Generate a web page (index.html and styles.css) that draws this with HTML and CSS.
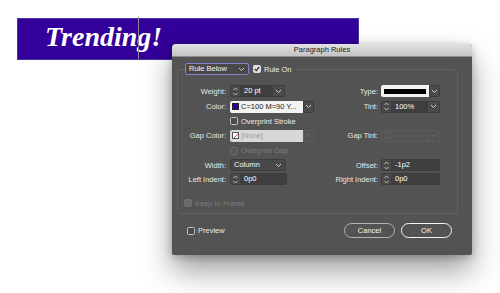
FILE: index.html
```html
<!DOCTYPE html>
<html lang="en">
<head>
  <meta charset="UTF-8" />
  <title>Paragraph Rules</title>
  <link rel="stylesheet" href="styles.css">
</head>
<body>
  <div class="page">
    <!-- Layout frame -->
    <div class="banner">
      <span class="banner-text">Trending!</span>
      <span class="caret"></span>
    </div>

    <!-- Dialog window -->
    <div class="dialog">
      <div class="titlebar">Paragraph Rules</div>
      <div class="dialog-body">
        <div class="top-row">
          <div class="select focus">
            <span>Rule Below</span>
            <svg width="7" height="5" viewBox="0 0 7 5"><path d="M1 1l2.5 2.5L6 1" fill="none" stroke="#d0d0d0"/></svg>
          </div>
          <div class="check">
            <span class="cb on"><svg width="6" height="6" viewBox="0 0 6 6"><path d="M0.8 3l1.5 1.6L5.2 1" fill="none" stroke="#333" stroke-width="1.3"/></svg></span>
            <span>Rule On</span>
          </div>
        </div>

        <div class="group">
          <div class="grid">
            <!-- row 1 -->
            <div class="lbl">Weight:</div>
            <div class="spin w55">
              <span class="spin-arrows"><svg width="5" height="9" viewBox="0 0 5 9"><path d="M0.5 3l2-2 2 2M0.5 6l2 2 2-2" fill="none" stroke="#c8c8c8" stroke-width="0.9"/></svg></span>
              <span class="spin-val">20 pt</span>
              <span class="spin-drop"><svg width="7" height="5" viewBox="0 0 7 5"><path d="M1 1l2.5 2.5L6 1" fill="none" stroke="#d0d0d0"/></svg></span>
            </div>
            <div class="lbl r">Type:</div>
            <div class="field">
              <span class="field-main type-main"><span class="type-line"></span></span>
              <span class="field-drop"><svg width="7" height="5" viewBox="0 0 7 5"><path d="M1 1l2.5 2.5L6 1" fill="none" stroke="#d0d0d0"/></svg></span>
            </div>

            <!-- row 2 -->
            <div class="lbl">Color:</div>
            <div class="field">
              <span class="field-main"><span class="swatch"></span>C=100 M=90 Y...</span>
              <span class="field-drop"><svg width="7" height="5" viewBox="0 0 7 5"><path d="M1 1l2.5 2.5L6 1" fill="none" stroke="#d0d0d0"/></svg></span>
            </div>
            <div class="lbl r">Tint:</div>
            <div class="spin">
              <span class="spin-arrows"><svg width="5" height="9" viewBox="0 0 5 9"><path d="M0.5 3l2-2 2 2M0.5 6l2 2 2-2" fill="none" stroke="#c8c8c8" stroke-width="0.9"/></svg></span>
              <span class="spin-val">100%</span>
              <span class="spin-drop"><svg width="7" height="5" viewBox="0 0 7 5"><path d="M1 1l2.5 2.5L6 1" fill="none" stroke="#d0d0d0"/></svg></span>
            </div>

            <!-- row 3 -->
            <div></div>
            <div class="check span2">
              <span class="cb"></span>
              <span>Overprint Stroke</span>
            </div>
            <div></div>

            <!-- row 4 -->
            <div class="lbl">Gap Color:</div>
            <div class="field off">
              <span class="field-main"><span class="swatch none"><svg width="7" height="7" viewBox="0 0 7 7"><path d="M0 7L7 0" stroke="#d3202a" stroke-width="1.2"/></svg></span>[None]</span>
              <span class="field-drop"><svg width="7" height="5" viewBox="0 0 7 5"><path d="M1 1l2.5 2.5L6 1" fill="none" stroke="#6c6c6c"/></svg></span>
            </div>
            <div class="lbl r">Gap Tint:</div>
            <div class="spin off">
              <span class="spin-arrows"><svg width="5" height="9" viewBox="0 0 5 9"><path d="M0.5 3l2-2 2 2M0.5 6l2 2 2-2" fill="none" stroke="#6c6c6c" stroke-width="0.9"/></svg></span>
              <span class="spin-val"></span>
              <span class="spin-drop"><svg width="7" height="5" viewBox="0 0 7 5"><path d="M1 1l2.5 2.5L6 1" fill="none" stroke="#6c6c6c"/></svg></span>
            </div>

            <!-- row 5 -->
            <div></div>
            <div class="check span2 off">
              <span class="cb"></span>
              <span>Overprint Gap</span>
            </div>
            <div></div>

            <!-- row 6 -->
            <div class="lbl">Width:</div>
            <div class="select w56">
              <span>Column</span>
              <svg width="7" height="5" viewBox="0 0 7 5"><path d="M1 1l2.5 2.5L6 1" fill="none" stroke="#d0d0d0"/></svg>
            </div>
            <div class="lbl r">Offset:</div>
            <div class="spin">
              <span class="spin-arrows"><svg width="5" height="9" viewBox="0 0 5 9"><path d="M0.5 3l2-2 2 2M0.5 6l2 2 2-2" fill="none" stroke="#c8c8c8" stroke-width="0.9"/></svg></span>
              <span class="spin-val">-1p2</span>
            </div>

            <!-- row 7 -->
            <div class="lbl">Left Indent:</div>
            <div class="spin w57">
              <span class="spin-arrows"><svg width="5" height="9" viewBox="0 0 5 9"><path d="M0.5 3l2-2 2 2M0.5 6l2 2 2-2" fill="none" stroke="#c8c8c8" stroke-width="0.9"/></svg></span>
              <span class="spin-val">0p0</span>
            </div>
            <div class="lbl r">Right Indent:</div>
            <div class="spin">
              <span class="spin-arrows"><svg width="5" height="9" viewBox="0 0 5 9"><path d="M0.5 3l2-2 2 2M0.5 6l2 2 2-2" fill="none" stroke="#c8c8c8" stroke-width="0.9"/></svg></span>
              <span class="spin-val">0p0</span>
            </div>
          </div>

          <div class="check keep off">
            <span class="cb filled"></span>
            <span>Keep In Frame</span>
          </div>
        </div>

        <div class="footer">
          <div class="check">
            <span class="cb"></span>
            <span>Preview</span>
          </div>
          <div class="buttons">
            <button class="btn">Cancel</button>
            <button class="btn default">OK</button>
          </div>
        </div>
      </div>
    </div>
  </div>
</body>
</html>
```

FILE: styles.css
```css
body {
  margin: 0;
  background-color: #ffffff;
  font-family: 'Liberation Sans', Arial, sans-serif;
  overflow: hidden;
}

.page {
  position: relative;
  width: 500px;
  height: 293px;
  padding-top: 18px;
  box-sizing: border-box;
}

/* Purple text frame */
.banner {
  position: relative;
  margin-left: 17px;
  width: 342px;
  height: 42px;
  background-color: #330099;
  box-sizing: border-box;
  border: 1px solid #4a35a8;
}

.banner-text {
  display: block;
  padding: 4px 0 0 27px;
  font-family: 'Liberation Serif', 'Times New Roman', serif;
  font-style: italic;
  font-weight: bold;
  font-size: 28px;
  line-height: 28px;
  color: #ffffff;
}

.caret {
  position: absolute;
  left: 120px;
  top: -2px;
  width: 1px;
  height: 42px;
  background-color: #8d8a9c;
}

/* Dialog */
.dialog {
  position: absolute;
  left: 172px;
  top: 44px;
  width: 300px;
  height: 211px;
  background-color: #535353;
  border-radius: 4px 4px 2px 2px;
  box-shadow: 0 16px 30px rgba(0, 0, 0, 0.38), 0 2px 8px rgba(0, 0, 0, 0.25);
  font-size: 7.5px;
  color: #e8e8e8;
}

.titlebar {
  height: 12px;
  line-height: 12px;
  text-align: center;
  color: #222222;
  background: linear-gradient(#e2e2e2, #c4c4c4);
  border-bottom: 1px solid #8e8e8e;
  border-radius: 4px 4px 0 0;
}

.dialog-body {
  padding: 6px 0 0 5px;
}

.top-row {
  position: relative;
  z-index: 1;
  display: flex;
  align-items: center;
  gap: 4px;
  width: fit-content;
  height: 12px;
  margin-left: 8px;
  padding-right: 4px;
  background-color: #535353;
}

.select {
  display: flex;
  align-items: center;
  justify-content: space-between;
  height: 12px;
  padding: 0 3px 0 3px;
  box-sizing: border-box;
  background-color: #484848;
  border: 1px solid #3c3c3c;
  border-radius: 2px;
  color: #f6f6f6;
  line-height: 10px;
}

.select.focus {
  width: 64px;
  border-color: #7f86cf;
}

.select.w56 {
  width: 56px;
}

.check {
  display: flex;
  align-items: center;
  gap: 2px;
  color: #ececec;
}

.cb {
  display: flex;
  align-items: center;
  justify-content: center;
  width: 8px;
  height: 8px;
  box-sizing: border-box;
  border: 1px solid #c4c4c4;
  border-radius: 1.5px;
  background-color: #4a4a4a;
  margin-right: 1px;
}

.cb.on {
  background-color: #dedede;
  border-color: #dedede;
}

.check.off {
  color: #7d7d7d;
}

.check.off .cb {
  border-color: #6f6f6f;
  background-color: #575757;
}

.check.off .cb.filled {
  background-color: #6a6a6a;
}

.group {
  position: relative;
  margin-top: -6px;
  width: 281px;
  height: 145px;
  box-sizing: border-box;
  border: 1px solid #626262;
  border-radius: 3px;
  padding-top: 13px;
}

.grid {
  display: grid;
  grid-template-columns: 52px 84px 67px 59px;
  grid-template-rows: 16px 15px 14px 15px 15px 14px 14px;
  align-items: center;
}

.lbl {
  text-align: right;
  padding-right: 4px;
  white-space: nowrap;
}

.lbl.r {
  padding-right: 3px;
}

.span2 {
  grid-column: span 2;
}

/* Spinner fields */
.spin {
  display: flex;
  height: 12px;
  box-sizing: border-box;
  border: 1px solid #3c3c3c;
  border-radius: 2px;
  background-color: #4b4b4b;
}

.spin.w55 {
  width: 55px;
}

.spin.w57 {
  width: 57px;
}

.spin-arrows {
  display: flex;
  align-items: center;
  justify-content: center;
  width: 9px;
  border-right: 1px solid #3c3c3c;
}

.spin-val {
  flex: 1;
  padding-left: 3px;
  background-color: #3f3f3f;
  color: #ffffff;
  line-height: 10px;
}

.spin-drop,
.field-drop {
  display: flex;
  align-items: center;
  justify-content: center;
  width: 11px;
  border-left: 1px solid #3c3c3c;
}

.spin.off {
  border-color: #5c5c5c;
  background-color: #545454;
}

.spin.off .spin-arrows,
.spin.off .spin-drop {
  border-color: #5c5c5c;
}

.spin.off .spin-val {
  background-color: #555555;
}

/* Swatch fields */
.field {
  display: flex;
  height: 12px;
}

.field-main {
  flex: 1;
  display: flex;
  align-items: center;
  gap: 2px;
  padding-left: 2px;
  background-color: #f3f3f3;
  border-radius: 2px 0 0 2px;
  color: #151515;
  white-space: nowrap;
}

.field-drop {
  width: 9px;
  background-color: #4b4b4b;
  border: 1px solid #3c3c3c;
  border-radius: 0 2px 2px 0;
}

.type-main {
  padding: 3px 3px;
}

.type-line {
  flex: 1;
  height: 5px;
  background-color: #000000;
}

.swatch {
  display: flex;
  width: 7px;
  height: 7px;
  box-sizing: border-box;
  background-color: #330099;
  border: 1px solid #222222;
}

.swatch.none {
  background-color: #ffffff;
  border-color: #555555;
  overflow: hidden;
}

.field.off .field-main {
  background-color: #d8d8d8;
  color: #a0a0a0;
}

.field.off .field-drop {
  background-color: #535353;
  border-color: #5e5e5e;
}

.keep {
  margin: 11px 0 0 6px;
  height: 12px;
}

/* Footer */
.footer {
  display: flex;
  align-items: center;
  height: 15px;
  margin-top: 9px;
  padding-left: 10px;
  margin-right: 20px;
}

.buttons {
  display: flex;
  gap: 6px;
  margin-left: auto;
}

.btn {
  width: 51px;
  height: 15px;
  padding: 0;
  background-color: #535353;
  border: 1px solid #b3b3b3;
  border-radius: 8px;
  color: #f6f6f6;
  font-family: 'Liberation Sans', Arial, sans-serif;
  font-size: 7.5px;
}

.btn.default {
  border: 1.5px solid #f4f4f4;
}
```
